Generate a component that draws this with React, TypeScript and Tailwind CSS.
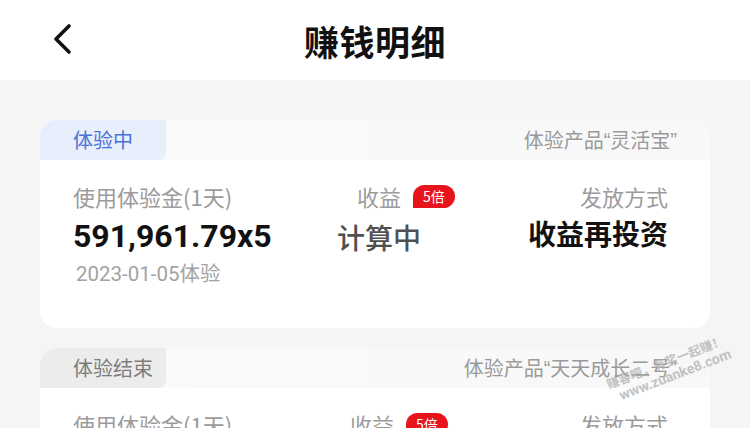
import React from "react";

const cjk = { fontFamily: '"Noto Sans CJK SC", "Noto Sans", sans-serif' };
const num = { fontFamily: 'Roboto, "Noto Sans CJK SC", sans-serif' };
const q = { fontFamily: '"Liberation Sans", sans-serif' };

function Card({
  tab,
  tabClass,
  name,
  midShift,
}: {
  tab: string;
  tabClass: string;
  name: string;
  midShift: string;
}) {
  return (
    <div className="rounded-[16px] overflow-hidden bg-white">
      <div className="flex h-[40px] items-stretch bg-gradient-to-r from-[#fafafa] to-[#f8f8f8]">
        <div
          className={`w-[126px] rounded-br-[8px] rounded-tl-[16px] flex items-center pl-[33px] text-[20px] ${tabClass}`}
        >
          {tab}
        </div>
        <div className="flex-1 flex items-center justify-end text-[20px] text-[#9a9a9a] pr-[33px]">
          体验产品<span style={q}>“</span>
          {name}
          <span style={q}>”</span>
        </div>
      </div>
      <div className="relative h-[168px] pl-[33px] pr-[42px] pt-[21px] flex">
        <div className="w-[264px] flex flex-col">
          <div className="text-[22px] leading-[30px] text-[#9b9b9b]">使用体验金(1天)</div>
          <div style={num} className="mt-[7px] text-[32px] leading-[36px] font-bold text-[#111]">
            591,961.79x5
          </div>
          <div style={num} className="mt-[5px] ml-[3px] text-[20.5px] leading-[26px] text-[#a3a3a3]">
            2023-01-05<span style={cjk}>体验</span>
          </div>
        </div>
        <div className={`flex flex-col ${midShift}`}>
          <div className="flex items-center pl-[20px]">
            <span className="text-[22px] leading-[30px] text-[#9b9b9b]">收益</span>
            <span className="ml-[12px] h-[23px] px-[10px] rounded-full rounded-bl-none bg-[#e8141c] text-white text-[14px] leading-[23px]">
              5倍
            </span>
          </div>
          <div className="mt-[8px] text-[28px] leading-[36px] font-medium text-[#505050]">计算中</div>
        </div>
        <div className="ml-auto flex flex-col items-end">
          <div className="text-[22px] leading-[30px] text-[#9b9b9b]">发放方式</div>
          <div className="mt-[4px] text-[28px] leading-[36px] font-bold text-[#111]">收益再投资</div>
        </div>
      </div>
    </div>
  );
}

export default function App() {
  return (
    <div style={cjk} className="w-[750px] h-[428px] overflow-hidden bg-[#f5f5f5] relative">
      <div className="h-[80px] bg-white flex items-center justify-center relative">
        <svg
          className="absolute left-[50px] top-[23px]"
          width="26"
          height="32"
          viewBox="0 0 26 32"
          fill="none"
        >
          <path d="M19 3 L6 16 L19 29" stroke="#111" strokeWidth="3.6" strokeLinecap="round" strokeLinejoin="round" />
        </svg>
        <div className="text-[35px] font-bold text-[#111] leading-none tracking-[0.5px]">赚钱明细</div>
      </div>
      <div className="px-[40px] pt-[40px] flex flex-col gap-[20px]">
        <Card tab="体验中" tabClass="bg-[#e7eefc] text-[#4a72d6]" name="灵活宝" midShift="" />
        <Card tab="体验结束" tabClass="bg-[#ececec] text-[#7d7d7d]" name="天天成长二号" midShift="-ml-[7px]" />
      </div>
      <div className="absolute left-[604px] top-[377px] -rotate-[21deg] origin-top-left text-[#b5b5b5] opacity-80 pointer-events-none whitespace-nowrap">
        <div className="text-[12.5px] leading-[15px] font-bold">赚客吧，有奖一起赚！</div>
        <div style={num} className="text-[14px] leading-[16px] font-bold pl-[8px]">www.zuanke8.com</div>
      </div>
    </div>
  );
}
